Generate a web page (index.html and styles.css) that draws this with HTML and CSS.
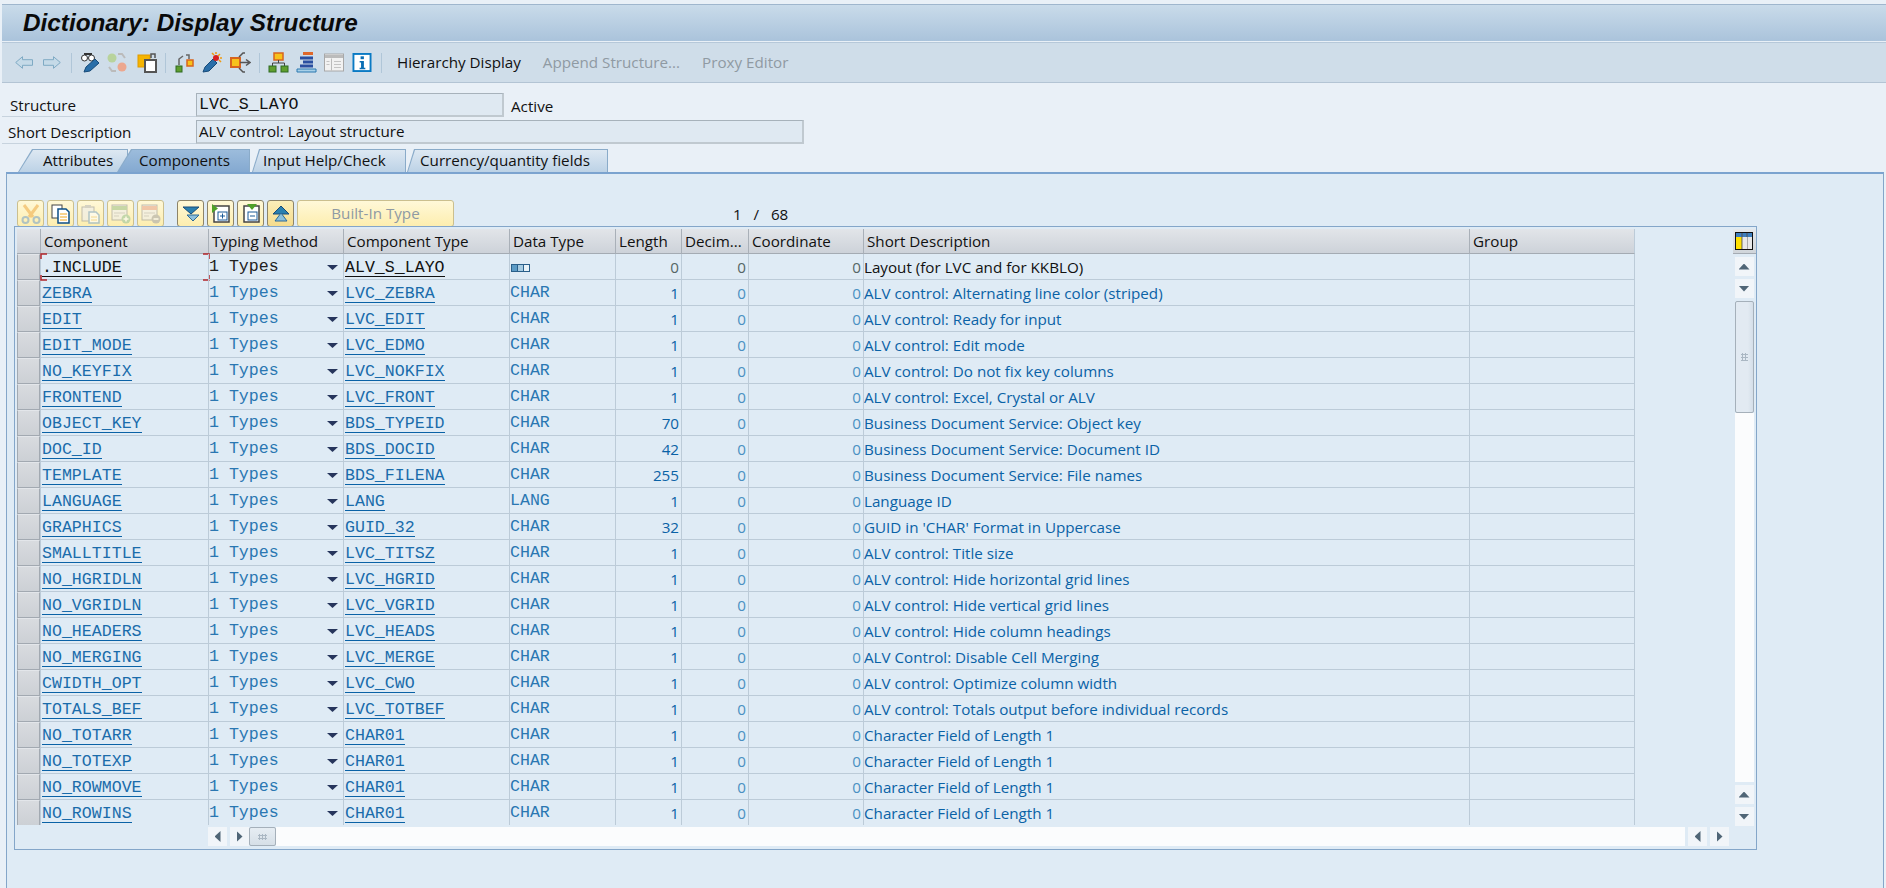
FILE: index.html
```html
<!DOCTYPE html>
<html lang="en">
<head>
<meta charset="utf-8">
<title>Dictionary: Display Structure</title>
<link rel="stylesheet" href="styles.css">
</head>
<body>
<div class="app">
  <header class="titlebar"><h1>Dictionary: Display Structure</h1></header>
  <nav class="toolbar">
    <svg class="ic ic-arrow" viewBox="0 0 18 13"><path d="M.7 6.5 7.5.7v3h10v5.6h-10v3z" fill="#c5dae8" stroke="#7faac4"/></svg>
    <svg class="ic ic-arrow g10" viewBox="0 0 18 13"><path d="M17.3 6.5 10.500.7v3H.5v5.600h10v3z" fill="#c5dae8" stroke="#7faac4"/></svg>
    <i class="sep s1"></i>
    <svg class="ic ic21" viewBox="0 0 21 21"><circle cx="4.500" cy="6" r="3" fill="#fff" stroke="#333"/><circle cx="11.500" cy="6" r="3" fill="#fff" stroke="#333"/><path d="M4 2h8" stroke="#333" stroke-width="2"/><path d="m4 20 2-5 9-8 4 4-9 8z" fill="#2a6ea8" stroke="#164a78"/></svg>
    <svg class="ic ic21 g6" viewBox="0 0 21 21"><circle cx="5" cy="6" r="4.500" fill="#b8d39c"/><circle cx="15" cy="15" r="4.500" fill="#eca78f"/><path d="M11 2h4l3 4M9 19H5l-3-4" fill="none" stroke="#bbb" stroke-width="2"/></svg>
    <svg class="ic ic21 g9" viewBox="0 0 21 21"><rect x="1" y="3" width="12" height="12" fill="#f5b400" stroke="#e09a00"/><rect x="8" y="8" width="11" height="12" fill="#fff" stroke="#555" stroke-width="2"/><path d="M14 6V2h4v4" fill="none" stroke="#555" stroke-width="1.500"/></svg>
    <i class="sep s2"></i>
    <svg class="ic ic19" viewBox="0 0 19 20"><rect x="1" y="13" width="6" height="6" fill="#5f9e2e" stroke="#2f6b22"/><rect x="12" y="7" width="6" height="6" fill="#f7c21b" stroke="#d8641e" stroke-width="1.500"/><path d="M4 12V6l4-3M11 2h3v4" fill="none" stroke="#666" stroke-width="1.500"/></svg>
    <svg class="ic ic21 g8" viewBox="0 0 21 21"><path d="m1 20 2-5 8-8 4 4-8 8z" fill="#2a6ea8" stroke="#164a78"/><circle cx="14" cy="6" r="3" fill="#d62020"/><path d="M14 0v2M20 6h-2M18 2l-2 2M10 1l2 2M19 10l-2-2" stroke="#f09a10" stroke-width="1.500"/></svg>
    <svg class="ic ic21 g7" viewBox="0 0 21 21"><rect x="1" y="6" width="9" height="9" fill="#f7c21b" stroke="#d8641e" stroke-width="2"/><path d="M10 10.500h9M16 7.500l4 3-4 3M9 5l4-4h2M9 16l4 4h2" fill="none" stroke="#555" stroke-width="1.500"/></svg>
    <i class="sep s3"></i>
    <svg class="ic ic21" viewBox="0 0 21 21"><rect x="6" y="1" width="9" height="7" fill="#f7c21b" stroke="#d8641e" stroke-width="1.500"/><path d="M10.500 8v3M4.500 14v-3h12v3" fill="none" stroke="#444"/><rect x="1" y="14" width="7" height="6" fill="#5f9e2e" stroke="#2f6b22"/><rect x="13" y="14" width="7" height="6" fill="#5f9e2e" stroke="#2f6b22"/></svg>
    <svg class="ic ic21 g7" viewBox="0 0 21 21"><path d="M7 1.500h10" stroke="#e0682a" stroke-width="3"/><path d="M4 6h13M7 10h10M4 14h13" stroke="#2a4fa0" stroke-width="3"/><path d="M1 17h19v3H1z" fill="#a8d0e8" stroke="#2a79b0"/></svg>
    <svg class="ic ic20 g7" viewBox="0 0 20 18"><rect x=".5" y=".5" width="19" height="17" fill="#f2f2f2" stroke="#a8a8a8"/><path d="M1 3h18" stroke="#bbb" stroke-width="3"/><path d="M7.500 5v12" stroke="#bbb"/><path d="M2.500 8h3M2.500 11h3M10 8h7M10 11h7M10 14h7" stroke="#c4c4c4"/></svg>
    <svg class="ic ic20 g8" viewBox="0 0 20 20"><rect x="1" y="1" width="18" height="18" fill="#fff" stroke="#0a7ac4" stroke-width="2"/><rect x="8.500" y="3.500" width="3.500" height="3" fill="#0a6eb4"/><path d="M7.500 8.500H12v7h1.500V17h-6v-1.500H9V10H7.500z" fill="#0a6eb4"/></svg>
    <i class="sep s4"></i>
    <span class="tbtn">Hierarchy Display</span>
    <span class="tbtn off">Append Structure...</span>
    <span class="tbtn off">Proxy Editor</span>
  </nav>

  <section class="form">
    <div class="frow">
      <label class="flabel l1">Structure</label>
      <span class="field mono w1">LVC_S_LAYO</span>
      <span class="status">Active</span>
    </div>
    <div class="frow">
      <label class="flabel l2">Short Description</label>
      <span class="field w2">ALV control: Layout structure</span>
    </div>
  </section>

  <div class="tabs">
    <div class="tab t1"><span>Attributes</span></div>
    <div class="tab t2 active"><span>Components</span></div>
    <div class="tab t3"><span>Input Help/Check</span></div>
    <div class="tab t4"><span>Currency/quantity fields</span></div>
  </div>

  <main class="panel">
    <div class="actions">
      <span class="ab dis"><svg viewBox="0 0 20 20"><circle cx="4.500" cy="16" r="3" fill="none" stroke="#7ea6c8" stroke-width="2"/><circle cx="15.500" cy="16" r="3" fill="none" stroke="#7ea6c8" stroke-width="2"/><path d="m3 1 9 12M17 1 8 13" stroke="#f0b050" stroke-width="3"/></svg></span>
      <span class="ab"><svg viewBox="0 0 20 20"><rect x="1" y="1" width="10" height="13" fill="#fff" stroke="#444"/><path d="M7 5h8l3 3v11H7z" fill="#fff" stroke="#0d4f88" stroke-width="1.500"/><path d="M9 10h7M9 13h7M9 16h7" stroke="#f0a820"/></svg></span>
      <span class="ab dis"><svg viewBox="0 0 20 20"><rect x="1" y="3" width="12" height="14" fill="#eee" stroke="#999"/><rect x="4" y="1" width="6" height="3" fill="#bbb"/><path d="M8 8h7l3 3v8H8z" fill="#fff" stroke="#7ea6c8" stroke-width="1.500"/><path d="M10 13h6M10 16h6" stroke="#f0c870"/></svg></span>
      <span class="ab dis"><svg viewBox="0 0 20 20"><rect x="1" y="1" width="15" height="15" fill="#eee" stroke="#999"/><path d="M1 4h15" stroke="#a4c48c" stroke-width="4"/><path d="M3 9h11M3 12h5" stroke="#bbb"/><circle cx="15" cy="15" r="4.500" fill="#9cc69c"/><path d="M12.500 15h5M15 12.500v5" stroke="#fff" stroke-width="1.500"/></svg></span>
      <span class="ab dis"><svg viewBox="0 0 20 20"><rect x="1" y="1" width="15" height="15" fill="#eee" stroke="#999"/><path d="M1 4h15" stroke="#e8a890" stroke-width="4"/><path d="M3 9h11M3 12h5" stroke="#bbb"/><circle cx="15" cy="15" r="4.500" fill="#aaa"/><path d="M12.500 15h5" stroke="#fff" stroke-width="1.500"/></svg></span>
      <span class="ab on g13"><svg viewBox="0 0 20 20"><path d="M2 3h16l-8 7z" fill="#2a80b0" stroke="#164a78"/><path d="M6 11h12l-6 6z" fill="#8cc0dc" stroke="#2a6a98"/></svg></span>
      <span class="ab on"><svg viewBox="0 0 20 20"><rect x="3" y="2" width="15" height="16" fill="#fff" stroke="#444" stroke-width="1.500"/><path d="M1 0v9l6-4.500z" fill="#4fa028"/><rect x="7" y="8" width="9" height="8" fill="#fff" stroke="#1a5a98"/><path d="M9 12h5M11.500 9.500v5" stroke="#1a5a98"/></svg></span>
      <span class="ab on"><svg viewBox="0 0 20 20"><rect x="3" y="2" width="15" height="16" fill="#fff" stroke="#444" stroke-width="1.500"/><path d="M6 0h10l-5 6z" fill="#4fa028"/><rect x="7" y="8" width="9" height="8" fill="#fff" stroke="#1a5a98"/><path d="M9 12h5" stroke="#1a5a98"/></svg></span>
      <span class="ab on dk"><svg viewBox="0 0 20 20"><path d="M10 2 18 10H2z" fill="#2a80b0" stroke="#164a78"/><path d="M10 9l6 8H4z" fill="#8cc0dc" stroke="#2a6a98"/></svg></span>
      <span class="ab wide">Built-In Type</span>
      <span class="pager">1&nbsp;&nbsp; /&nbsp;&nbsp; 68</span>
    </div>

    <div class="grid">
      <div class="gridbody">
        <div class="tablewrap">
          <table>
            <colgroup><col class="c0"><col class="c1"><col class="c2"><col class="c3"><col class="c4"><col class="c5"><col class="c6"><col class="c7"><col class="c8"><col class="c9"></colgroup>
            <thead><tr><th class="sel"></th><th>Component</th><th>Typing Method</th><th>Component Type</th><th>Data Type</th><th>Length</th><th>Decim...</th><th>Coordinate</th><th>Short Description</th><th>Group</th></tr></thead>
            <tbody>
              <tr class="first"><td class="sel"></td><td class="focus"><u class="m">.INCLUDE</u><svg class="corners" viewBox="0 0 170 28"><path d="M1 6V1h6M163 1h6v5M1 22v5h6M163 27h6v-5" fill="none" stroke="#b3262a" stroke-width="1.500"/></svg></td><td class="ty">1 Types</td><td><u class="m">ALV_S_LAYO</u></td><td><svg class="struct" viewBox="0 0 20 8"><rect x=".5" y=".5" width="6" height="7" fill="#5b9bc6" stroke="#2a5f8a"/><rect x="6.500" y=".5" width="6" height="7" fill="#a6cbe2" stroke="#2a5f8a"/><rect x="12.500" y=".5" width="6" height="7" fill="#e8f2f8" stroke="#2a5f8a"/></svg></td><td class="n">0</td><td class="n d">0</td><td class="n d">0</td><td class="t">Layout (for LVC and for KKBLO)</td><td></td></tr>
              <tr><td class="sel"></td><td><u class="m">ZEBRA</u></td><td class="ty">1 Types</td><td><u class="m">LVC_ZEBRA</u></td><td class="m">CHAR</td><td class="n">1</td><td class="n d">0</td><td class="n d">0</td><td class="t">ALV control: Alternating line color (striped)</td><td></td></tr>
              <tr><td class="sel"></td><td><u class="m">EDIT</u></td><td class="ty">1 Types</td><td><u class="m">LVC_EDIT</u></td><td class="m">CHAR</td><td class="n">1</td><td class="n d">0</td><td class="n d">0</td><td class="t">ALV control: Ready for input</td><td></td></tr>
              <tr><td class="sel"></td><td><u class="m">EDIT_MODE</u></td><td class="ty">1 Types</td><td><u class="m">LVC_EDMO</u></td><td class="m">CHAR</td><td class="n">1</td><td class="n d">0</td><td class="n d">0</td><td class="t">ALV control: Edit mode</td><td></td></tr>
              <tr><td class="sel"></td><td><u class="m">NO_KEYFIX</u></td><td class="ty">1 Types</td><td><u class="m">LVC_NOKFIX</u></td><td class="m">CHAR</td><td class="n">1</td><td class="n d">0</td><td class="n d">0</td><td class="t">ALV control: Do not fix key columns</td><td></td></tr>
              <tr><td class="sel"></td><td><u class="m">FRONTEND</u></td><td class="ty">1 Types</td><td><u class="m">LVC_FRONT</u></td><td class="m">CHAR</td><td class="n">1</td><td class="n d">0</td><td class="n d">0</td><td class="t">ALV control: Excel, Crystal or ALV</td><td></td></tr>
              <tr><td class="sel"></td><td><u class="m">OBJECT_KEY</u></td><td class="ty">1 Types</td><td><u class="m">BDS_TYPEID</u></td><td class="m">CHAR</td><td class="n">70</td><td class="n d">0</td><td class="n d">0</td><td class="t">Business Document Service: Object key</td><td></td></tr>
              <tr><td class="sel"></td><td><u class="m">DOC_ID</u></td><td class="ty">1 Types</td><td><u class="m">BDS_DOCID</u></td><td class="m">CHAR</td><td class="n">42</td><td class="n d">0</td><td class="n d">0</td><td class="t">Business Document Service: Document ID</td><td></td></tr>
              <tr><td class="sel"></td><td><u class="m">TEMPLATE</u></td><td class="ty">1 Types</td><td><u class="m">BDS_FILENA</u></td><td class="m">CHAR</td><td class="n">255</td><td class="n d">0</td><td class="n d">0</td><td class="t">Business Document Service: File names</td><td></td></tr>
              <tr><td class="sel"></td><td><u class="m">LANGUAGE</u></td><td class="ty">1 Types</td><td><u class="m">LANG</u></td><td class="m">LANG</td><td class="n">1</td><td class="n d">0</td><td class="n d">0</td><td class="t">Language ID</td><td></td></tr>
              <tr><td class="sel"></td><td><u class="m">GRAPHICS</u></td><td class="ty">1 Types</td><td><u class="m">GUID_32</u></td><td class="m">CHAR</td><td class="n">32</td><td class="n d">0</td><td class="n d">0</td><td class="t">GUID in 'CHAR' Format in Uppercase</td><td></td></tr>
              <tr><td class="sel"></td><td><u class="m">SMALLTITLE</u></td><td class="ty">1 Types</td><td><u class="m">LVC_TITSZ</u></td><td class="m">CHAR</td><td class="n">1</td><td class="n d">0</td><td class="n d">0</td><td class="t">ALV control: Title size</td><td></td></tr>
              <tr><td class="sel"></td><td><u class="m">NO_HGRIDLN</u></td><td class="ty">1 Types</td><td><u class="m">LVC_HGRID</u></td><td class="m">CHAR</td><td class="n">1</td><td class="n d">0</td><td class="n d">0</td><td class="t">ALV control: Hide horizontal grid lines</td><td></td></tr>
              <tr><td class="sel"></td><td><u class="m">NO_VGRIDLN</u></td><td class="ty">1 Types</td><td><u class="m">LVC_VGRID</u></td><td class="m">CHAR</td><td class="n">1</td><td class="n d">0</td><td class="n d">0</td><td class="t">ALV control: Hide vertical grid lines</td><td></td></tr>
              <tr><td class="sel"></td><td><u class="m">NO_HEADERS</u></td><td class="ty">1 Types</td><td><u class="m">LVC_HEADS</u></td><td class="m">CHAR</td><td class="n">1</td><td class="n d">0</td><td class="n d">0</td><td class="t">ALV control: Hide column headings</td><td></td></tr>
              <tr><td class="sel"></td><td><u class="m">NO_MERGING</u></td><td class="ty">1 Types</td><td><u class="m">LVC_MERGE</u></td><td class="m">CHAR</td><td class="n">1</td><td class="n d">0</td><td class="n d">0</td><td class="t">ALV Control: Disable Cell Merging</td><td></td></tr>
              <tr><td class="sel"></td><td><u class="m">CWIDTH_OPT</u></td><td class="ty">1 Types</td><td><u class="m">LVC_CWO</u></td><td class="m">CHAR</td><td class="n">1</td><td class="n d">0</td><td class="n d">0</td><td class="t">ALV control: Optimize column width</td><td></td></tr>
              <tr><td class="sel"></td><td><u class="m">TOTALS_BEF</u></td><td class="ty">1 Types</td><td><u class="m">LVC_TOTBEF</u></td><td class="m">CHAR</td><td class="n">1</td><td class="n d">0</td><td class="n d">0</td><td class="t">ALV control: Totals output before individual records</td><td></td></tr>
              <tr><td class="sel"></td><td><u class="m">NO_TOTARR</u></td><td class="ty">1 Types</td><td><u class="m">CHAR01</u></td><td class="m">CHAR</td><td class="n">1</td><td class="n d">0</td><td class="n d">0</td><td class="t">Character Field of Length 1</td><td></td></tr>
              <tr><td class="sel"></td><td><u class="m">NO_TOTEXP</u></td><td class="ty">1 Types</td><td><u class="m">CHAR01</u></td><td class="m">CHAR</td><td class="n">1</td><td class="n d">0</td><td class="n d">0</td><td class="t">Character Field of Length 1</td><td></td></tr>
              <tr><td class="sel"></td><td><u class="m">NO_ROWMOVE</u></td><td class="ty">1 Types</td><td><u class="m">CHAR01</u></td><td class="m">CHAR</td><td class="n">1</td><td class="n d">0</td><td class="n d">0</td><td class="t">Character Field of Length 1</td><td></td></tr>
              <tr><td class="sel"></td><td><u class="m">NO_ROWINS</u></td><td class="ty">1 Types</td><td><u class="m">CHAR01</u></td><td class="m">CHAR</td><td class="n">1</td><td class="n d">0</td><td class="n d">0</td><td class="t">Character Field of Length 1</td><td></td></tr>
            </tbody>
          </table>
        </div>
        <div class="vbar">
          <span class="cfg"><svg viewBox="0 0 18 18"><rect x=".5" y=".5" width="17" height="17" fill="#fff" stroke="#111"/><rect x="1" y="1" width="16" height="4" fill="#3f7fbe"/><rect x="1" y="5" width="6" height="12" fill="#ffe000"/><path d="M7 1v16M12 1v16" stroke="#555"/><rect x="8" y="5" width="4" height="12" fill="#e8e8e8"/><rect x="13" y="5" width="4" height="12" fill="#e8e8e8"/></svg></span>
          <span class="sb up"></span>
          <span class="sb down"></span>
          <span class="vthumb"><i class="grip"></i></span>
          <span class="vtrack"></span>
          <span class="sb up"></span>
          <span class="sb down"></span>
        </div>
      </div>
      <div class="hbar">
        <span class="sb left"></span>
        <span class="sb right"></span>
        <span class="hthumb"><i class="grip h"></i></span>
        <span class="htrack"></span>
        <span class="sb left"></span>
        <span class="sb right"></span>
      </div>
    </div>
  </main>
</div>
</body>
</html>
```
FILE: styles.css
```css
* { box-sizing: border-box; }
html, body { margin: 0; height: 100%; }
body {
  width: 1886px; height: 888px; overflow: hidden;
  background: #f2f6fa;
  font: 15.200px/1 "Open Sans", "Liberation Sans", sans-serif;
  color: #111;
}
.app { height: 888px; padding: 4px 0 0 2px; display: flex; flex-direction: column; background: #e9f0f7; }
.titlebar {
  height: 37px; flex: none; padding-left: 21px; display: flex; align-items: center;
  background: linear-gradient(#c9dbea, #aac3db);
  border-top: 1px solid #9fb6cd;
}
.titlebar h1 { margin: 0; font: italic bold 24.300px/1 "Liberation Sans", sans-serif; color: #0a0a0a; }
.toolbar {
  height: 41px; flex: none; margin-top: 1px; display: flex; align-items: center; padding-left: 13px;
  background: #cfdde9; border-top: 1px solid #b6c8d9; border-bottom: 1px solid #b3c4d4;
}
.ic { display: block; flex: none; }
.ic-arrow { width: 18px; height: 13px; }
.g10 { margin-left: 10px; }
.ic21 { width: 21px; height: 21px; }
.ic19 { width: 19px; height: 20px; }
.ic20 { width: 20px; height: 19px; }
.g6 { margin-left: 6px; } .g7 { margin-left: 7px; } .g8 { margin-left: 8px; } .g9 { margin-left: 9px; }
.sep { width: 1px; height: 20px; background: #b0c6d8; flex: none; }
.s1 { margin: 0 8px 0 10px; } .s2 { margin: 0 9px 0 7px; } .s3 { margin: 0 8px 0 8px; } .s4 { margin: 0 15px 0 9px; }
.tbtn { margin-right: 22px; white-space: nowrap; }
.off { color: #8f9aa3; }

.form { margin-top: 10px; flex: none; display: flex; flex-direction: column; gap: 3px; }
.frow { display: flex; align-items: stretch; height: 24px; }
.flabel { width: 194px; flex: none; border-bottom: 1px solid #c7d3de; display: flex; align-items: center; padding-top: 3px; }
.l1 { padding-left: 8px; } .l2 { padding-left: 6px; }
.field {
  display: flex; align-items: center; padding: 1px 0 0 2px; background: #dfe9f2;
  border: 2px solid #b2bcc4; border-width: 1px 2px 2px 1px; border-color: #a7b2bb #c0c9d0 #c0c9d0 #a7b2bb;
}
.mono { font-family: "Liberation Mono", monospace; font-size: 16.600px; }
.w1 { width: 308px; } .w2 { width: 608px; }
.status { margin-left: 7px; display: flex; align-items: center; padding-top: 3px; }

.tabs { margin-top: 5px; height: 23px; flex: none; display: flex; padding-left: 16px; }
.tab { position: relative; height: 23px; background: #8aabc9; display: flex; align-items: center; }
.tab::before { content: ""; position: absolute; inset: 1px 1px 0 1px; background: linear-gradient(#dde8f2, #bcd2e6); clip-path: inherit; }
.tab span { position: relative; }
.t1 { width: 110px; padding-left: 25px; clip-path: polygon(0 100%, 14px 0, 100% 0, 100% 100%); }
.t2 { width: 133px; margin-left: -11px; padding-left: 22px; clip-path: polygon(0 100%, 14px 0, 100% 0, 100% 100%); }
.t2::before { background: linear-gradient(#9cbcdc, #84a9d1); }
.t3 { width: 154px; margin-left: 2px; padding-left: 11px; clip-path: polygon(0 100%, 7px 0, 100% 0, 100% 100%); }
.t4 { width: 201px; margin-left: 1px; padding-left: 13px; clip-path: polygon(0 100%, 7px 0, 100% 0, 100% 100%); }

.panel {
  width: 1878px; margin-left: 4px; flex: 1; padding: 26px 0 0 7px;
  background: #dfebf5; border: 1px solid #84a6c9; border-top: 2px solid #7ba3cf; border-bottom: 0;
}
.actions { display: flex; align-items: center; height: 27px; padding-left: 3px; gap: 3px; position: relative; }
.ab {
  width: 27px; height: 27px; flex: none; display: flex; align-items: center; justify-content: center;
  background: linear-gradient(#fff8d8, #fdeeaf); border: 1px solid #cbbf8e; border-radius: 3px;
}
.ab svg { width: 20px; height: 20px; display: block; }
.ab.dis svg { opacity: .6; }
.ab.on { border-color: #8d8468; }
.ab.dk { background: linear-gradient(#fbeeb9, #f5dc8d); }
.g13 { margin-left: 10px; }
.ab.wide { width: 157px; color: #8f9aa3; }
.pager { position: absolute; left: 719px; top: 7px; }

.grid { width: 1743px; height: 624px; border: 1px solid #84a6c9; padding: 2px 0 0 2px; display: flex; flex-direction: column; background: #dfebf5; margin-top: -1px; position: relative; }
.gridbody { display: flex; height: 597px; flex: none; }
.tablewrap { width: 1715px; height: 596px; overflow: hidden; flex: none; }
table { border-collapse: separate; border-spacing: 0; table-layout: fixed; width: 1618px; }
.c0 { width: 23px; } .c1 { width: 168px; } .c2 { width: 135px; } .c3 { width: 166px; } .c4 { width: 106px; }
.c5 { width: 66px; } .c6 { width: 67px; } .c7 { width: 115px; } .c8 { width: 606px; } .c9 { width: 166px; }
th {
  height: 25px; padding: 2px 0 0 3px; text-align: left; font-weight: 400; white-space: nowrap; overflow: hidden;
  background: linear-gradient(#e2e5e9, #cdd2d9); border-left: 1px solid #a9b0b8; border-bottom: 1px solid #a4abb3; color: #111;
}
th:first-child { border-left: 0; }
th:last-child, td:last-child { border-right: 1px solid #bccbd8; }
td {
  height: 26px; padding: 2px 2px 0 1px; border-left: 1px solid #bccbd8; border-bottom: 1px solid #bccbd8;
  color: #0a62a6; white-space: nowrap; overflow: hidden;
}
td.sel, th.sel { padding: 0; }
td.sel { background: linear-gradient(#d8dbdf, #ccd0d5); border: 1px solid #a2a9b1; border-top-color: #e3e6ea; }
.first td { color: #111; }
.m, td.ty { font-family: "Liberation Mono", monospace; font-size: 16.600px; }
td.m { padding-left: 0; color: #2a77b2; }
u.m { display: inline-block; text-decoration: none; border-bottom: 1.500px solid #0a62a6; line-height: 16px; margin-top: 2px; color: #1a6cab; }
.first u.m { border-bottom-color: #111; color: #111; }
td.n { text-align: right; padding-right: 2px; }
td.n.d { color: #4a90c2; }
.first td.n { color: #566; }
td.t { padding-left: 0; }
td.ty { position: relative; padding-left: 0; color: #2a77b2; }
td.ty::after {
  content: ""; position: absolute; right: 5px; top: 11px; width: 11px; height: 5px;
  background: #26355c; clip-path: polygon(0 0, 100% 0, 50% 100%);
}
.first td.ty { color: #222; }
.focus { position: relative; overflow: visible; }
.corners { position: absolute; left: -1px; top: -1px; width: 170px; height: 28px; }
.struct { width: 20px; height: 8px; display: block; }

.vbar { width: 26px; flex: none; display: flex; flex-direction: column; align-items: center; margin-left: -1px; }
.cfg { width: 23px; height: 25px; display: flex; align-items: center; justify-content: center; background: linear-gradient(#e4e8ec, #d0d5da); border-bottom: 1px solid #a4abb3; flex: none; }
.cfg svg { width: 18px; height: 18px; display: block; }
.sb { width: 19px; height: 19px; flex: none; background: #f1f5f9; margin-top: 3px; display: flex; align-items: center; justify-content: center; }
.sb::before { content: ""; display: block; width: 11px; height: 6px; background: #4f6576; }
.up::before { clip-path: polygon(50% 0, 100% 100%, 0 100%); }
.down::before { clip-path: polygon(0 0, 100% 0, 50% 100%); }
.left::before { width: 6px; height: 11px; clip-path: polygon(100% 0, 100% 100%, 0 50%); }
.right::before { width: 6px; height: 11px; clip-path: polygon(0 0, 100% 50%, 0 100%); }
.vthumb { width: 19px; height: 112px; flex: none; margin-top: 3px; display: flex; align-items: center; justify-content: center; background: linear-gradient(90deg, #e2eaf2 70%, #d4dee8); border: 1px solid #a5b0ba; border-radius: 2px; }
.vtrack { width: 19px; flex: 1; background: #fbfcfd; }
.grip { display: block; width: 7px; height: 8px; background: radial-gradient(circle, #aab7c3 1px, transparent 1.200px) 0 0/3px 3px; }
.grip.h { width: 9px; height: 6px; }
.hbar { display: flex; align-items: center; gap: 3px; padding-left: 191px; height: 19px; margin-top: 1px; }
.hbar .sb { width: 19px; margin-top: 0; }
.hthumb { width: 27px; height: 19px; flex: none; margin-left: -3px; display: flex; align-items: center; justify-content: center; background: linear-gradient(#e6edf3, #d6dfe7); border: 1px solid #a5b0ba; border-radius: 2px; }
.htrack { width: 1409px; height: 19px; flex: none; margin-left: -3px; background: #fbfcfd; }
```
